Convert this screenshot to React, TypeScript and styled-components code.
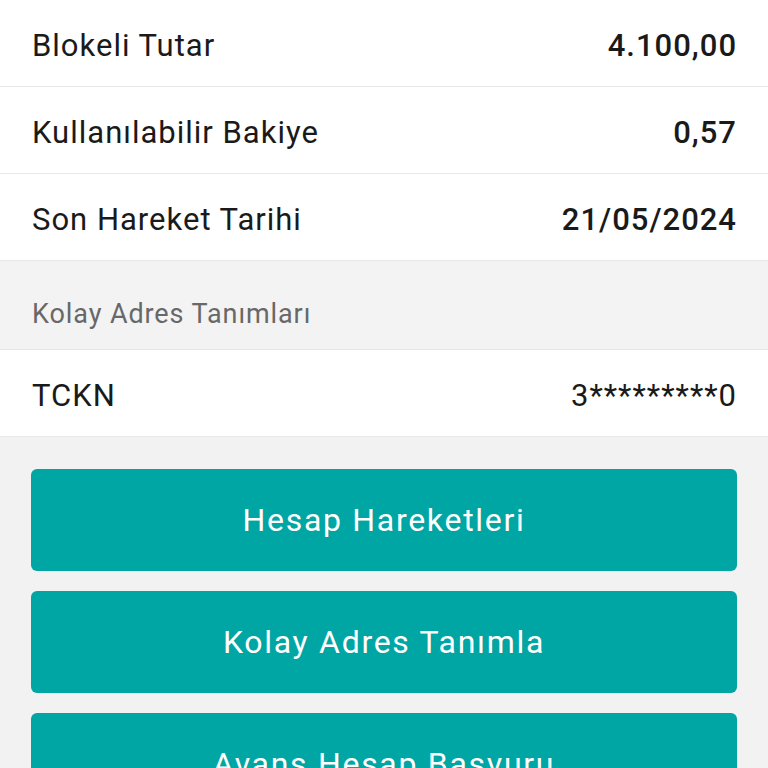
import React from "react";
import styled, { createGlobalStyle } from "styled-components";

const Global = createGlobalStyle`
  html, body { margin: 0; padding: 0; background: #f2f2f2; overflow: hidden; }
  body { font-family: Roboto, "Noto Sans", sans-serif; -webkit-font-smoothing: antialiased; }
`;

const Page = styled.div`
  display: flex;
  flex-direction: column;
  background: #f2f2f2;
  height: 768px;
  overflow: hidden;
`;

const Row = styled.div`
  display: flex;
  flex-shrink: 0;
  align-items: center;
  justify-content: space-between;
  box-sizing: border-box;
  height: 87px;
  padding: 5px 32px 0 32px;
  background: #ffffff;
  border-bottom: 1px solid #e8e8e8;
  color: #1a1a1a;
  font-size: 31px;
  letter-spacing: 1px;
`;

const Label = styled.span`
  font-weight: 400;
`;

const Value = styled.span<{ $strong?: boolean }>`
  font-weight: ${(p) => (p.$strong ? 500 : 400)};
  margin-right: -1px;
`;

const SectionHeader = styled.div`
  display: flex;
  flex-shrink: 0;
  align-items: center;
  box-sizing: border-box;
  height: 89px;
  padding: 18px 32px 0 32px;
  background: #f3f3f3;
  border-bottom: 1px solid #e6e6e6;
  color: #686868;
  font-size: 27px;
  letter-spacing: 0.9px;
`;

const Actions = styled.div`
  display: flex;
  flex-direction: column;
  gap: 20px;
  padding: 32px 31px 0 31px;
`;

const ActionButton = styled.button`
  flex-shrink: 0;
  height: 102px;
  border: none;
  border-radius: 6px;
  background: #00a6a4;
  color: #ffffff;
  font-family: Roboto, "Noto Sans", sans-serif;
  font-size: 32px;
  font-weight: 400;
  letter-spacing: 1.7px;
  cursor: pointer;
`;

const rows = [
  { label: "Blokeli Tutar", value: "4.100,00" },
  { label: "Kullanılabilir Bakiye", value: "0,57" },
  { label: "Son Hareket Tarihi", value: "21/05/2024" },
];

const buttons = ["Hesap Hareketleri", "Kolay Adres Tanımla", "Avans Hesap Başvuru"];

export default function App() {
  return (
    <>
      <Global />
      <Page>
        {rows.map((r) => (
          <Row key={r.label}>
            <Label>{r.label}</Label>
            <Value $strong>{r.value}</Value>
          </Row>
        ))}
        <SectionHeader>Kolay Adres Tanımları</SectionHeader>
        <Row>
          <Label>TCKN</Label>
          <Value>3*********0</Value>
        </Row>
        <Actions>
          {buttons.map((b) => (
            <ActionButton key={b}>{b}</ActionButton>
          ))}
        </Actions>
      </Page>
    </>
  );
}
